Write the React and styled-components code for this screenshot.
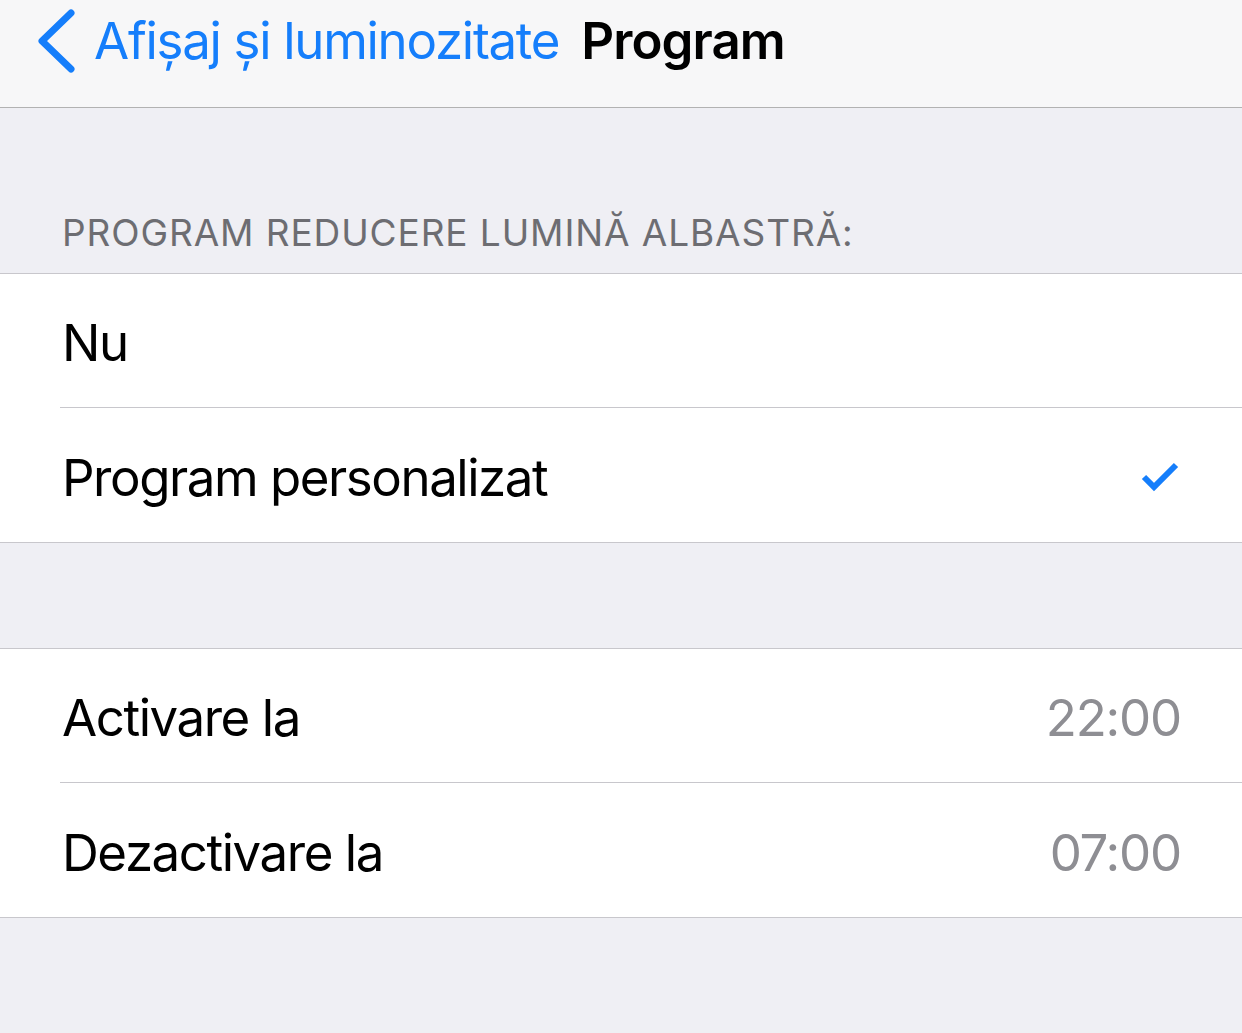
import React from 'react';
import styled, { createGlobalStyle } from 'styled-components';

const GlobalStyle = createGlobalStyle`
  html, body {
    margin: 0;
    padding: 0;
    background: #efeff4;
    font-family: Inter, "Noto Sans", sans-serif;
    -webkit-font-smoothing: antialiased;
  }
`;

const Page = styled.div`
  width: 1242px;
  height: 1033px;
  overflow: hidden;
  background: #efeff4;
`;

const NavBar = styled.div`
  height: 108px;
  background: #f7f7f8;
  border-bottom: 1px solid #b2b2b2;
  display: flex;
  align-items: center;
  padding: 0 0 26px 36px;
  box-sizing: border-box;
  gap: 22px;
`;

const BackButton = styled.div`
  display: flex;
  align-items: center;
  gap: 18px;
  color: #157efb;
  font-size: 51px;
  letter-spacing: -1.3px;
`;

const Title = styled.div`
  color: #000;
  font-size: 51px;
  font-weight: 600;
  letter-spacing: -0.9px;
`;

const SectionHeader = styled.div`
  padding: 102px 0 0 62px;
  height: 165px;
  box-sizing: border-box;
  color: #6d6d72;
  font-size: 37px;
  letter-spacing: 0.9px;
`;

const Spacer = styled.div`
  height: ${(p) => p.h}px;
`;

const Group = styled.div`
  background: #fff;
  border-top: 1px solid #c8c7cc;
  border-bottom: 1px solid #c8c7cc;
`;

const Row = styled.div`
  height: 134px;
  margin-left: 60px;
  padding: 4px 61px 0 2px;
  box-sizing: border-box;
  display: flex;
  align-items: center;
  justify-content: space-between;
  border-bottom: ${(p) => (p.last ? 'none' : '1px solid #c8c7cc')};
  font-size: 51px;
  color: #000;
  letter-spacing: -1.45px;
`;

const Value = styled.span`
  color: #8e8e93;
  letter-spacing: -1.2px;
`;

function Chevron() {
  return (
    <svg width="40" height="64" viewBox="0 0 40 64">
      <path d="M35 4 L6 32 L35 60" fill="none" stroke="#157efb" strokeWidth="7" strokeLinecap="round" strokeLinejoin="round" />
    </svg>
  );
}

function Check() {
  return (
    <svg width="40" height="32" viewBox="0 0 40 32">
      <path d="M3 16 L13 26 L35 4" fill="none" stroke="#157efb" strokeWidth="6" />
    </svg>
  );
}

export default function App() {
  return (
    <Page>
      <GlobalStyle />
      <NavBar>
        <BackButton>
          <Chevron />
          <span>Afișaj și luminozitate</span>
        </BackButton>
        <Title>Program</Title>
      </NavBar>
      <SectionHeader>PROGRAM REDUCERE LUMINĂ ALBASTRĂ:</SectionHeader>
      <Group>
        <Row>Nu</Row>
        <Row last>
          Program personalizat
          <Check />
        </Row>
      </Group>
      <Spacer h={105} />
      <Group>
        <Row>
          Activare la
          <Value>22:00</Value>
        </Row>
        <Row last>
          Dezactivare la
          <Value>07:00</Value>
        </Row>
      </Group>
    </Page>
  );
}
